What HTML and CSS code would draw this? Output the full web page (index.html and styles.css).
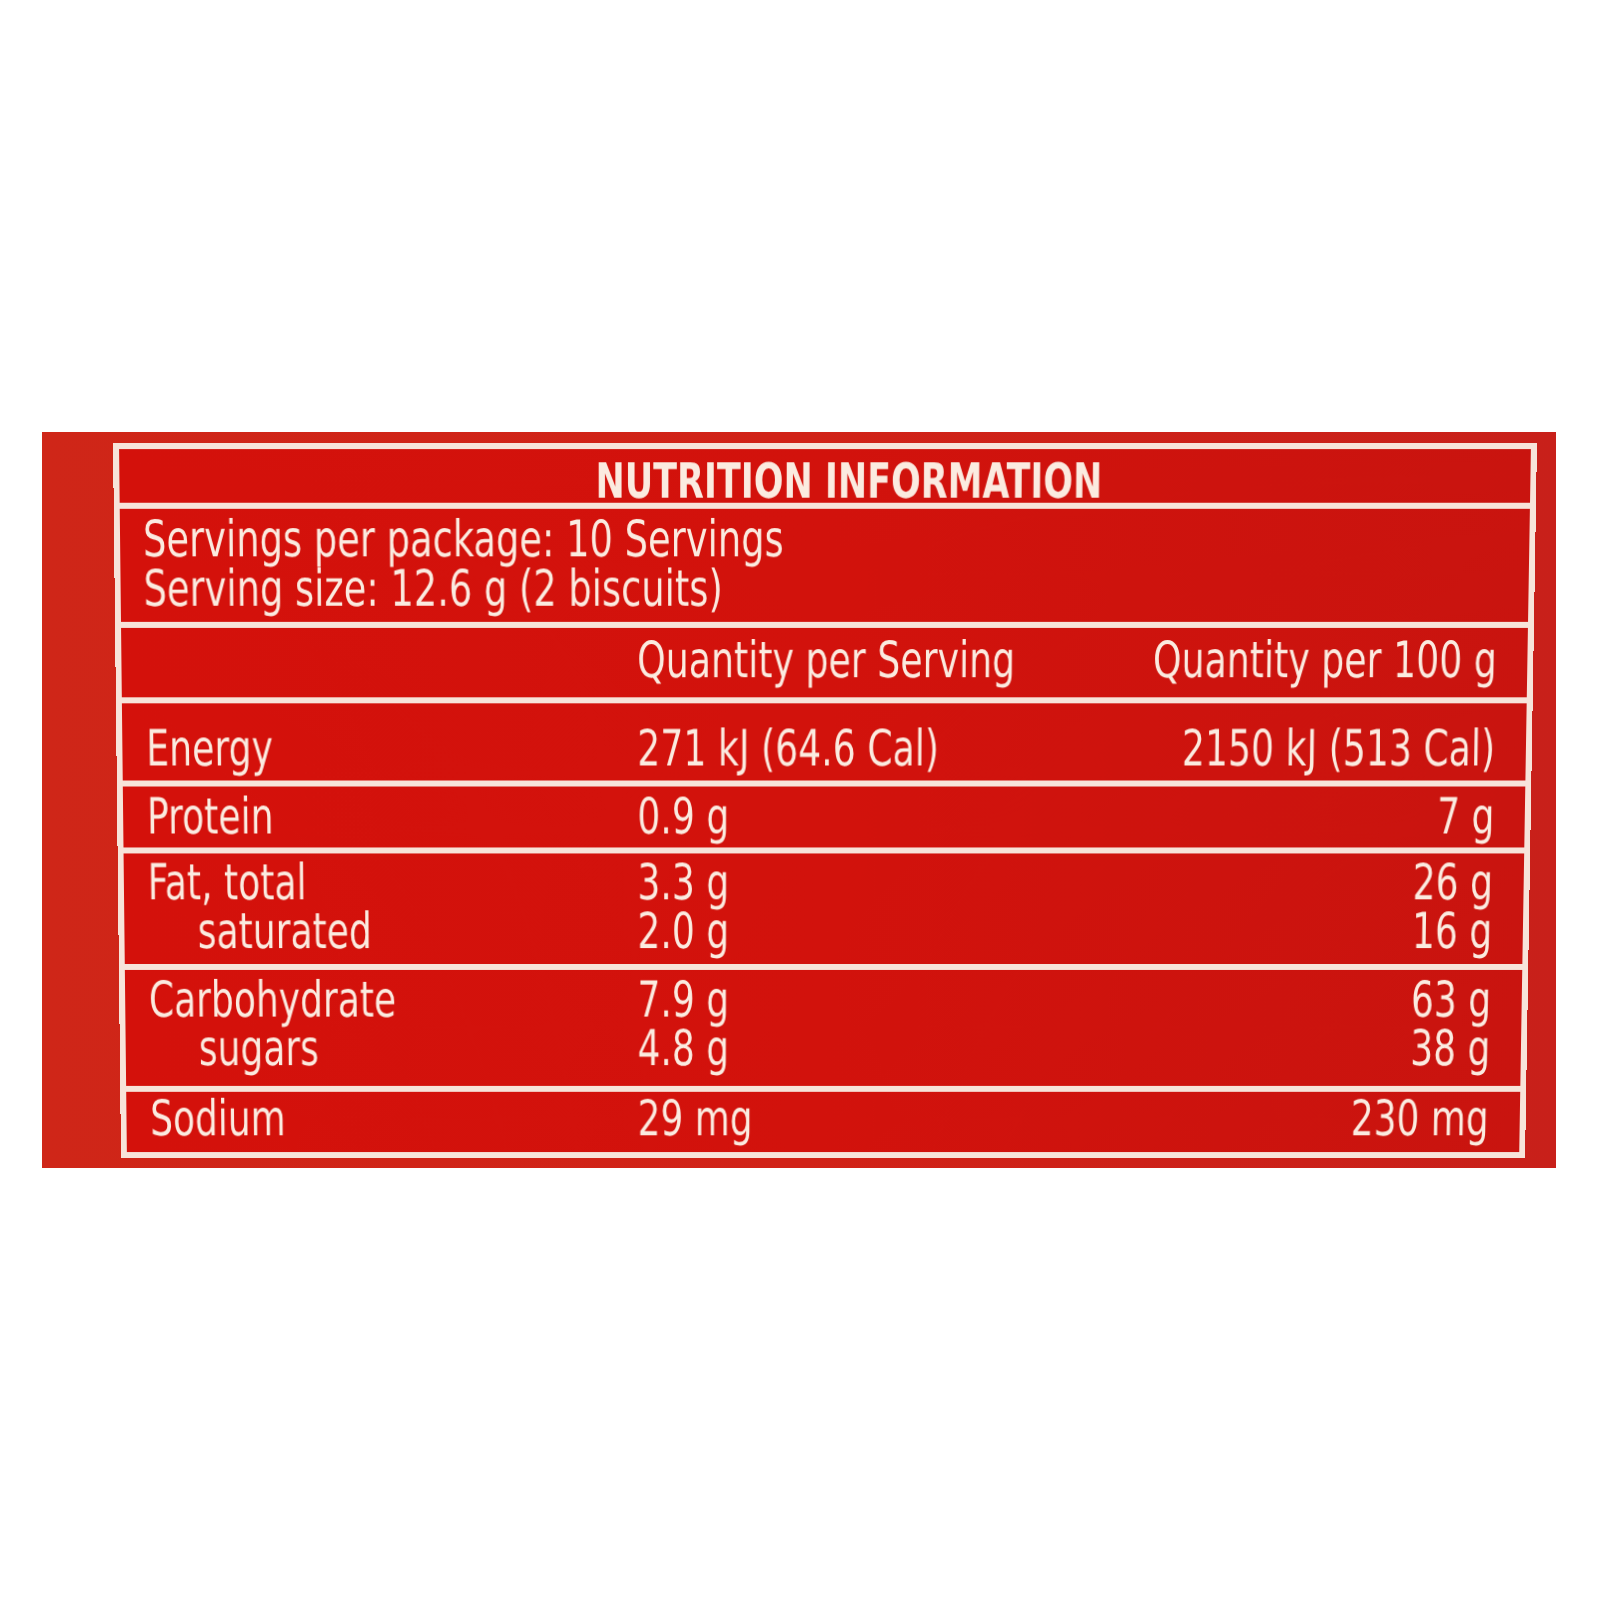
FILE: index.html
```html
<!DOCTYPE html>
<html lang="en">
<head>
<meta charset="utf-8">
<title>Nutrition Information</title>
<link rel="stylesheet" href="styles.css">
</head>
<body>
<div class="box">
  <div class="frame">
    <div class="title"><span class="t">NUTRITION INFORMATION</span></div>
    <div class="servings">
      <div><span class="t">Servings per package: 10 Servings</span></div>
      <div><span class="t">Serving size: 12.6 g (2 biscuits)</span></div>
    </div>
    <div class="row colhead">
      <div></div>
      <div><span class="t">Quantity per Serving</span></div>
      <div class="num"><span class="t">Quantity per 100 g</span></div>
    </div>
    <div class="row energy">
      <div><span class="t">Energy</span></div>
      <div><span class="t">271 kJ (64.6 Cal)</span></div>
      <div class="num"><span class="t">2150 kJ (513 Cal)</span></div>
    </div>
    <div class="row protein">
      <div><span class="t">Protein</span></div>
      <div><span class="t">0.9 g</span></div>
      <div class="num"><span class="t">7 g</span></div>
    </div>
    <div class="row fat">
      <div><div><span class="t">Fat, total</span></div><div class="sub"><span class="t">saturated</span></div></div>
      <div><div><span class="t">3.3 g</span></div><div><span class="t">2.0 g</span></div></div>
      <div class="num"><div><span class="t">26 g</span></div><div><span class="t">16 g</span></div></div>
    </div>
    <div class="row carb">
      <div><div><span class="t">Carbohydrate</span></div><div class="sub"><span class="t">sugars</span></div></div>
      <div><div><span class="t">7.9 g</span></div><div><span class="t">4.8 g</span></div></div>
      <div class="num"><div><span class="t">63 g</span></div><div><span class="t">38 g</span></div></div>
    </div>
    <div class="row sodium">
      <div><span class="t">Sodium</span></div>
      <div><span class="t">29 mg</span></div>
      <div class="num"><span class="t">230 mg</span></div>
    </div>
  </div>
</div>
</body>
</html>
```
FILE: styles.css
```css
html, body {
  margin: 0;
  padding: 0;
  background: #ffffff;
}

body {
  font-family: "Liberation Sans Narrow", "DejaVu Sans Condensed", "Liberation Sans", sans-serif;
  color: #fbebe0;
}

.box {
  box-sizing: border-box;
  margin: 432px 0 0 42px;
  width: 1514px;
  height: 736px;
  padding: 11px 19px 10px 71px;
  background: linear-gradient(90deg, #cf2618 0%, #d12217 50%, #c8201a 100%);
}

/* slight photographic perspective: the frame narrows toward the bottom */
.frame {
  box-sizing: border-box;
  height: 715px;
  border: 6px solid #f7e4da;
  background: linear-gradient(90deg, #d4110b 0%, #d2120c 50%, #c9140f 100%);
  display: flex;
  flex-direction: column;
  transform-origin: 50% 0;
  transform: matrix3d(1, 0, 0, 0, -0.0028, 1.0142, 0, 0.0000199, 0, 0, 1, 0, 0, 0, 0, 1);
}

.t {
  display: inline-block;
  white-space: nowrap;
  transform: scaleX(0.81);
  transform-origin: left center;
}

.num .t {
  transform-origin: right center;
}

.title {
  box-sizing: border-box;
  height: 59px;
  padding: 9px 0 0 48px;
  text-align: center;
  font-weight: bold;
  font-size: 48px;
  line-height: 44px;
  border-bottom: 6px solid #f7e4da;
}

.title .t {
  transform-origin: center center;
}

.servings {
  box-sizing: border-box;
  height: 118px;
  padding: 6px 0 0 23px;
  font-size: 50px;
  line-height: 49px;
  border-bottom: 6px solid #f7e4da;
}

.servings .t {
  transform: scaleX(0.82);
}

.row {
  box-sizing: border-box;
  display: grid;
  grid-template-columns: 494px minmax(0, 1fr) auto;
  padding-left: 24px;
  padding-right: 31px;
  font-size: 50px;
  line-height: 49px;
  border-bottom: 6px solid #f7e4da;
}

.num {
  text-align: right;
}

.sub {
  padding-left: 50px;
}

.colhead {
  height: 75px;
  padding-top: 8px;
}

.energy {
  height: 83px;
  padding-top: 21px;
}

.protein {
  height: 67px;
  padding-top: 6px;
}

.fat {
  height: 117px;
  padding-top: 5px;
}

.carb {
  height: 123px;
  padding-top: 6px;
}

.sodium {
  flex: 1;
  padding-top: 3px;
  border-bottom: none;
}
```
